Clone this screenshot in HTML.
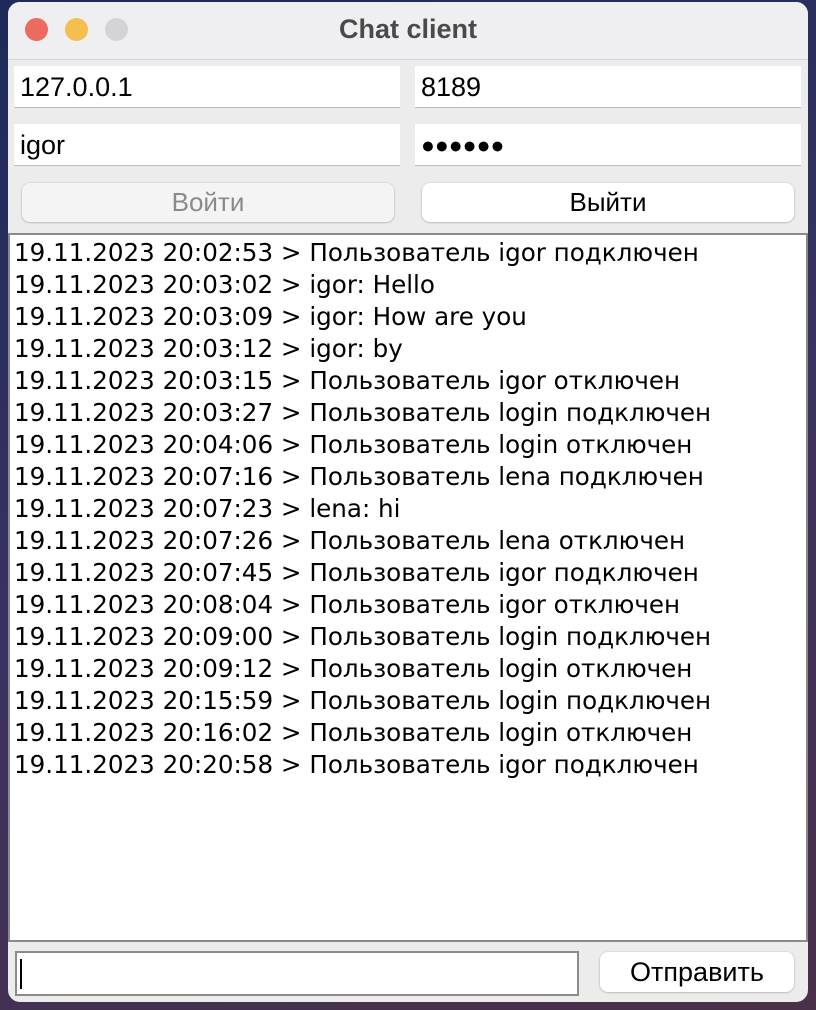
<!DOCTYPE html>
<html><head><meta charset="utf-8"><style>
body{margin:0;width:816px;height:1010px;overflow:hidden;background:linear-gradient(160deg,#1c2b5a 0%,#3a3260 50%,#4a3048 100%);font-family:"Liberation Sans",sans-serif;position:relative}
.win{position:absolute;left:8px;top:2px;width:800px;height:1000px;background:#ececec;border-radius:12px;overflow:hidden}
.title{position:absolute;left:0;top:0;width:800px;height:57px;background:#efeff1;border-bottom:1px solid #d6d6d6;text-align:center;line-height:54px;font-weight:bold;font-size:27px;color:#4a4a4a}
.dot{position:absolute;top:16px;width:23px;height:23px;border-radius:50%}
.f{position:absolute;background:#fff;border-bottom:1px solid #bdbdbd;height:42px;line-height:42px;font-size:27px;padding-left:6px;box-sizing:border-box;color:#000}
.b{position:absolute;height:39px;border-radius:8px;background:#fff;box-shadow:0 0.5px 2px rgba(0,0,0,.3);text-align:center;line-height:39px;font-size:26px}
.log{position:absolute;left:0;top:231px;width:800px;height:709px;background:#fff;border:2px solid #8a8a8a;box-sizing:border-box;font-family:"DejaVu Sans",sans-serif;font-size:24.6px;line-height:32px;padding:2px 0 0 4px;white-space:pre;color:#000}
</style></head><body>
<div class="win">
<div class="title">Chat client</div>
<div class="dot" style="left:17px;background:#ec6a5e"></div>
<div class="dot" style="left:57px;background:#f4bf4f"></div>
<div class="dot" style="left:97px;background:#d4d4d6"></div>
<div class="f" style="left:6px;top:64px;width:386px">127.0.0.1</div>
<div class="f" style="left:407px;top:64px;width:386px">8189</div>
<div class="f" style="left:6px;top:122px;width:386px">igor</div>
<div class="f" style="left:407px;top:122px;width:386px;font-size:23px">●●●●●●</div>
<div class="b" style="left:14px;top:181px;width:372px;background:#f4f4f4;color:#8a8a8a">Войти</div>
<div class="b" style="left:414px;top:181px;width:372px">Выйти</div>
<div class="log">19.11.2023 20:02:53 > Пользователь igor подключен
19.11.2023 20:03:02 > igor: Hello
19.11.2023 20:03:09 > igor: How are you
19.11.2023 20:03:12 > igor: by
19.11.2023 20:03:15 > Пользователь igor отключен
19.11.2023 20:03:27 > Пользователь login подключен
19.11.2023 20:04:06 > Пользователь login отключен
19.11.2023 20:07:16 > Пользователь lena подключен
19.11.2023 20:07:23 > lena: hi
19.11.2023 20:07:26 > Пользователь lena отключен
19.11.2023 20:07:45 > Пользователь igor подключен
19.11.2023 20:08:04 > Пользователь igor отключен
19.11.2023 20:09:00 > Пользователь login подключен
19.11.2023 20:09:12 > Пользователь login отключен
19.11.2023 20:15:59 > Пользователь login подключен
19.11.2023 20:16:02 > Пользователь login отключен
19.11.2023 20:20:58 > Пользователь igor подключен</div>
<div style="position:absolute;left:7px;top:949px;width:564px;height:45px;background:#fff;border:2px solid #8f8a8a;box-sizing:border-box"><div style="position:absolute;left:3px;top:6px;width:2px;height:30px;background:#000"></div></div>
<div class="b" style="left:592px;top:950px;width:194px;height:40px;line-height:40px;font-size:27px">Отправить</div>
</div>
</body></html>
